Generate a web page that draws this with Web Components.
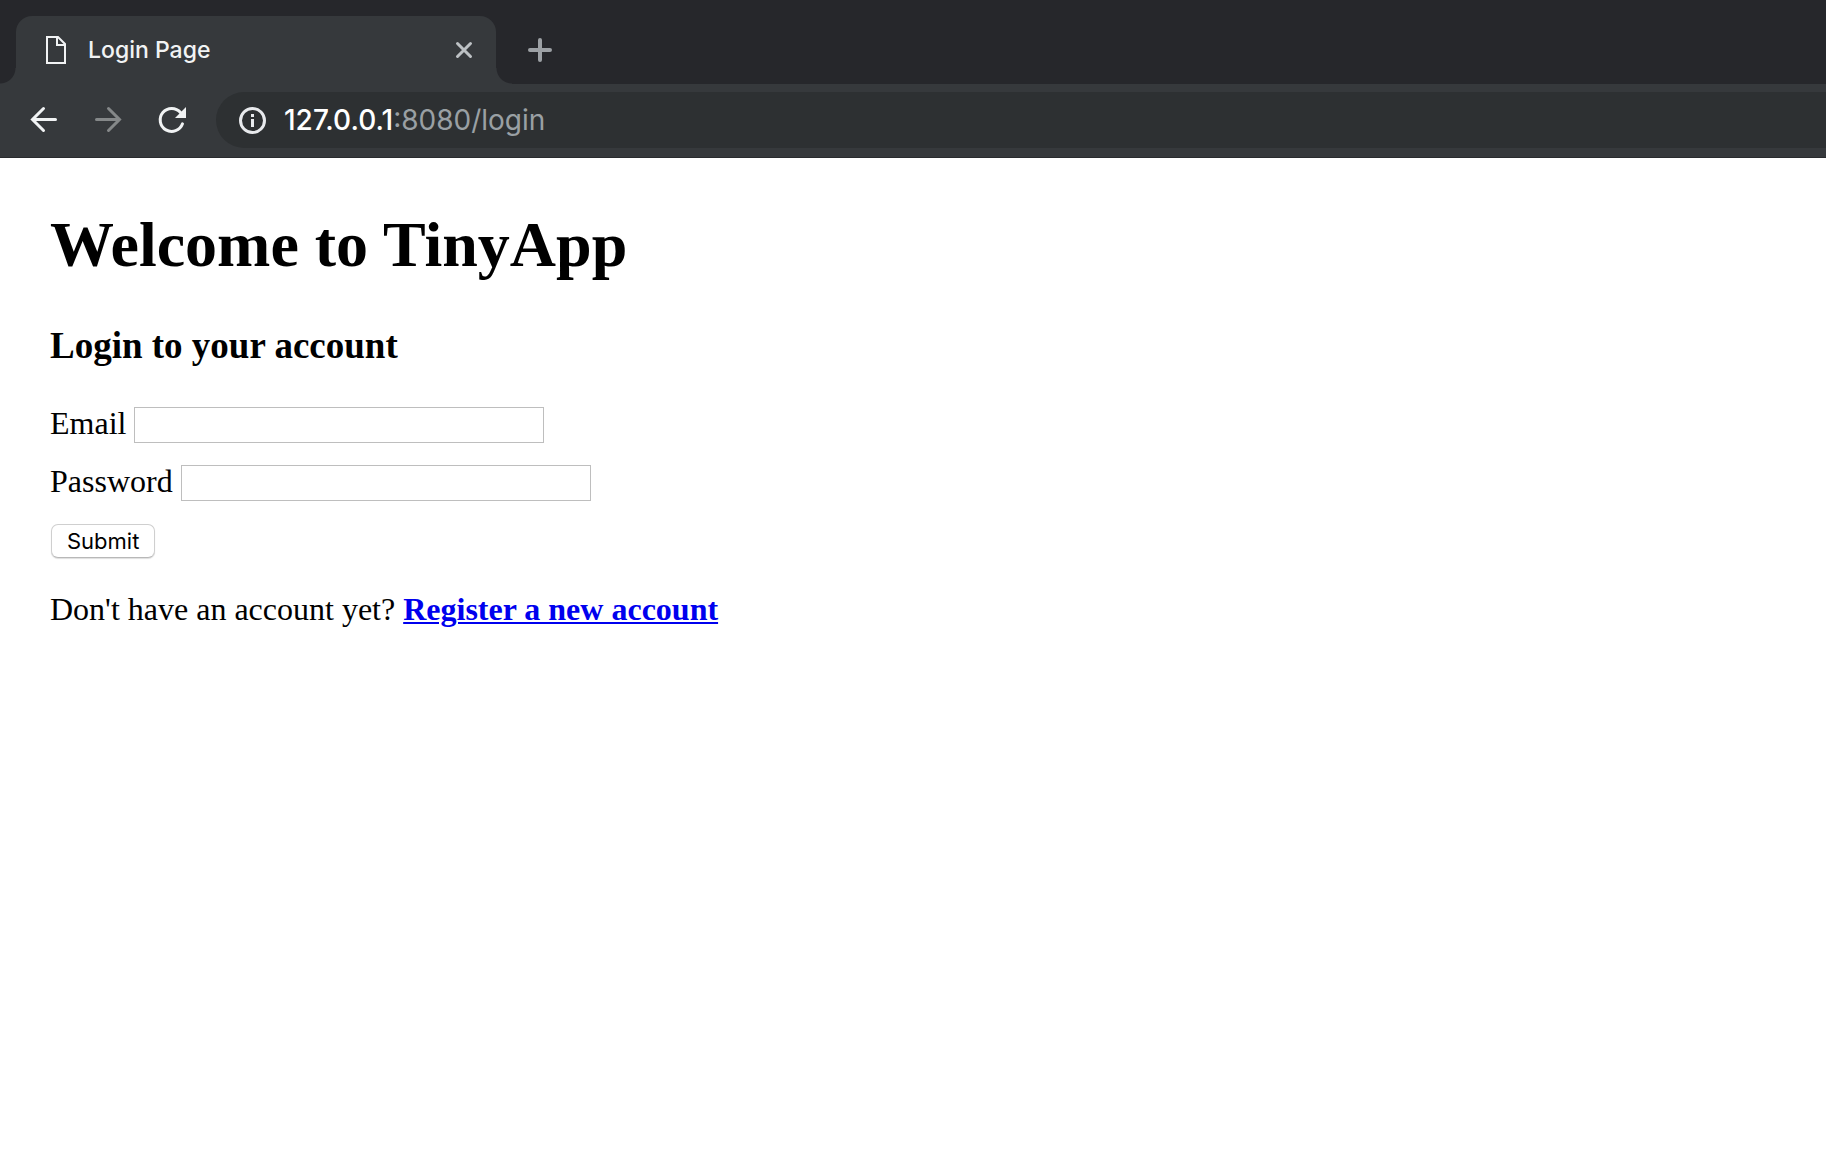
<!DOCTYPE html>
<html lang="en">
<head>
<meta charset="utf-8">
<title>Login Page</title>
<style>
html, body { margin: 0; background: #fff; }
body { font-family: "Liberation Serif", "Times New Roman", serif; font-size: 32px; color: #000; --strip: #26272b; --bar: #36393c; --field: #2d3032; --ui: Inter, "Liberation Sans", sans-serif; }
</style>
</head>
<body>
<browser-frame>
  <browser-tab slot="tabs">Login Page</browser-tab>
  <address-bar slot="address"><span slot="host">127.0.0.1</span><span slot="path">:8080/login</span></address-bar>
  <login-page></login-page>
</browser-frame>

<script>
const define = (name, html, connected) => customElements.define(name, class extends HTMLElement {
  constructor() {
    super();
    this.attachShadow({ mode: 'open' }).innerHTML = html;
  }
  connectedCallback() {
    if (connected) connected(this, this.shadowRoot);
  }
});

define('browser-tab', `
<style>
:host { display: flex; align-items: center; position: relative; box-sizing: border-box; width: 480px; height: 68px; padding: 0 20px 0 28px; border-radius: 16px 16px 0 0; background: var(--bar); color: #f1f3f4; font: 500 23px/32px var(--ui); }
:host::before, :host::after { content: ""; position: absolute; bottom: 0; width: 16px; height: 16px; }
:host::before { right: 100%; background: radial-gradient(circle at 0 0, transparent 15px, var(--bar) 16px); }
:host::after { left: 100%; background: radial-gradient(circle at 100% 0, transparent 15px, var(--bar) 16px); }
.title { flex: 1; margin-left: 20px; }
button { display: flex; padding: 0; border: 0; background: none; }
svg { display: block; }
</style>
<svg width="24" height="32" viewBox="0 0 24 32" fill="none" stroke="#f1f3f4" stroke-width="2"><path d="M3 3H14L21 10V29H3ZM13 3V11H21"/></svg>
<span class="title"><slot></slot></span>
<button aria-label="Close tab"><svg width="24" height="24" viewBox="0 0 24 24" stroke="#bdc1c4" stroke-width="3" stroke-linecap="round"><path d="M5.5 5.5L18.5 18.5M18.5 5.5L5.5 18.5"/></svg></button>
`);

define('address-bar', `
<style>
:host { display: flex; align-items: center; gap: 16px; flex: 1; box-sizing: border-box; height: 56px; padding-left: 20px; border-radius: 28px 0 0 28px; background: var(--field); font: 400 28px/36px var(--ui); color: #9aa0a4; }
.host { color: #fff; font-weight: 500; }
.url { outline: 0; white-space: nowrap; }
button { display: flex; padding: 0; border: 0; background: none; }
</style>
<button aria-label="View site information"><svg width="32" height="32" viewBox="0 0 32 32"><circle cx="16.5" cy="16.5" r="12" fill="none" stroke="#e8eaed" stroke-width="3"/><path d="M15 10h3v3h-3zM15 15h3v8h-3z" fill="#e8eaed"/></svg></button>
<div class="url" role="textbox" aria-label="Address"><span class="host"><slot name="host"></slot></span><slot name="path"></slot></div>
`);

define('browser-frame', `
<style>
:host { display: flex; flex-direction: column; min-height: 100vh; }
.strip { display: flex; align-items: center; gap: 28px; padding: 16px 16px 0; background: var(--strip); }
.bar { display: flex; align-items: center; gap: 28px; padding: 8px 0 9px 28px; background: var(--bar); border-bottom: 1px solid #292b2e; }
nav { display: flex; gap: 32px; }
button { display: flex; padding: 0; border: 0; background: none; }
svg { display: block; fill: none; stroke: #f1f3f4; stroke-width: 3; stroke-linecap: round; }
.off svg { stroke: #858889; }
.plus svg { stroke: #9da1a5; stroke-width: 4; }
slot[name=address] { display: flex; flex: 1; }
main { flex: 1; background: #fff; }
</style>
<header>
<div class="strip"><slot name="tabs"></slot><button class="plus" aria-label="New tab"><svg width="32" height="32" viewBox="0 0 32 32"><path d="M6 16H26M16 6V26"/></svg></button></div>
<div class="bar">
<nav aria-label="History">
<button aria-label="Back"><svg width="32" height="32" viewBox="0 0 32 32"><path d="M27.5 15.5H5M15.5 4.5L4.5 15.5L15.5 26.5"/></svg></button>
<button aria-label="Forward" class="off" disabled><svg width="32" height="32" viewBox="0 0 32 32"><path d="M4.5 15.5H27M16.5 4.5L27.5 15.5L16.5 26.5"/></svg></button>
<button aria-label="Reload"><svg width="32" height="32" viewBox="0 0 32 32"><path d="M24.5 8.5A11.5 11.5 0 1 0 26.5 19.8"/><path d="M30 3V14H19Z" fill="#f1f3f4" stroke="none"/></svg></button>
</nav>
<slot name="address"></slot>
</div>
</header>
<main><slot></slot></main>
`);

define('labelled-field', `
<style>
:host { display: flex; align-items: flex-start; gap: 8px; height: 36px; line-height: 32px; }
input { box-sizing: border-box; width: 410px; height: 36px; padding: 2px 4px; border: 1px solid #bebebe; border-radius: 0; background: #fff; font: 22px/30px var(--ui); }
</style>
<label for="field"></label><input id="field">
`, (el, root) => {
  root.querySelector('label').textContent = el.getAttribute('label');
  root.querySelector('input').type = el.getAttribute('type');
});

define('login-page', `
<style>
:host { display: block; padding: 50px; }
h1 { margin: 0 0 43px; font-size: 64px; line-height: 74px; }
h3 { margin: 0 0 40px; font-size: 37px; line-height: 42px; }
form { display: flex; flex-direction: column; align-items: flex-start; gap: 22px; }
button { box-sizing: border-box; height: 34px; margin: 1px 1px 0; padding: 0 15px; border: 1px solid #cfcfcf; border-bottom-color: #b8b8b8; border-radius: 7px; background: #fff; box-shadow: 0 1px 1px #0002; color: #000; font: 400 22px/32px var(--ui); }
p { margin: 33px 0 0; line-height: 36px; }
a { color: #00e; font-weight: bold; text-decoration-thickness: 2px; text-underline-offset: 2px; }
</style>
<h1>Welcome to TinyApp</h1>
<h3>Login to your account</h3>
<form>
<labelled-field label="Email" type="email"></labelled-field>
<labelled-field label="Password" type="password"></labelled-field>
<button type="submit">Submit</button>
</form>
<p>Don't have an account yet? <a href="#register">Register a new account</a></p>
`);
</script>
</body>
</html>
